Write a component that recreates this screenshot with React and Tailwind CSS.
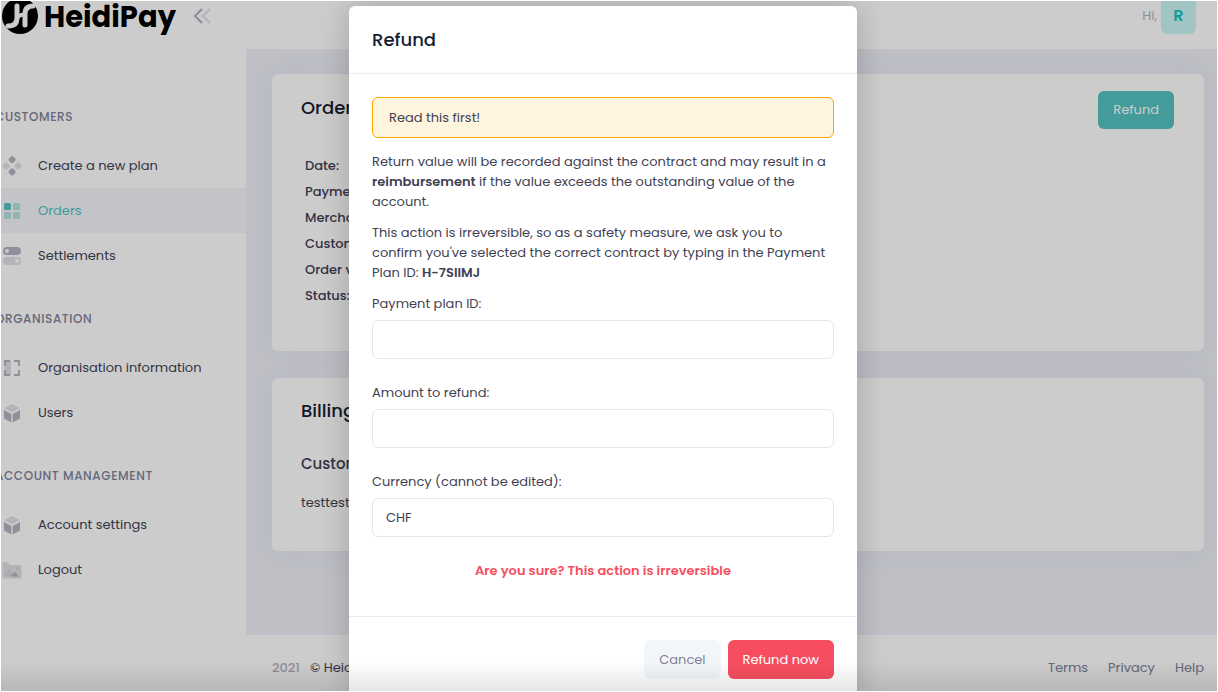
import React from 'react';

const CreateIcon = () => (
    <svg viewBox="0 0 24 24" className="w-6 h-6 text-[#b5b5c3]" fill="currentColor">
        <rect x="9" y="2.6" width="6" height="6" rx="1.6" transform="rotate(45 12 5.8)" />
        <rect x="9" y="14.8" width="6" height="6" rx="1.6" transform="rotate(45 12 17.9)" />
        <rect x="3" y="8.8" width="6" height="6" rx="1.6" transform="rotate(45 6 11.9)" opacity="0.4" />
        <rect x="15" y="8.8" width="6" height="6" rx="1.6" transform="rotate(45 18 11.9)" opacity="0.4" />
    </svg>
);

const OrdersIcon = () => (
    <svg viewBox="0 0 24 24" className="w-6 h-6 text-[#55c3c1]" fill="currentColor">
        <rect x="4" y="4" width="7" height="7" rx="1.5" />
        <rect x="13" y="4" width="7" height="7" rx="1.5" opacity="0.4" />
        <rect x="4" y="13" width="7" height="7" rx="1.5" opacity="0.4" />
        <rect x="13" y="13" width="7" height="7" rx="1.5" opacity="0.4" />
    </svg>
);

const SettlementsIcon = () => (
    <svg viewBox="0 0 24 24" className="w-6 h-6 text-[#b5b5c3]" fill="currentColor" fillRule="evenodd">
        <path d="M7 3h10a4 4 0 0 1 0 8H7a4 4 0 0 1 0-8zm0 6a2 2 0 1 0 0-4 2 2 0 0 0 0 4z" />
        <path opacity="0.4" d="M7 13h10a4 4 0 0 1 0 8H7a4 4 0 0 1 0-8zm10 6a2 2 0 1 0 0-4 2 2 0 0 0 0 4z" />
    </svg>
);

const OrganisationIcon = () => (
    <svg viewBox="0 0 24 24" className="w-6 h-6 text-[#b5b5c3]" fill="currentColor">
        <path d="M4 4h6v2H6v4H4zM20 4v6h-2V6h-4V4zM4 20v-6h2v4h4v2zM20 20h-6v-2h4v-4h2z" />
        <rect x="5" y="5" width="6" height="14" opacity="0.4" />
    </svg>
);

const CubeIcon = () => (
    <svg viewBox="0 0 24 24" className="w-6 h-6 text-[#b5b5c3]" fill="currentColor">
        <path d="M4 9.1l7.3 3.9v8.5l-6.800-3.700a1 1 0 0 1-.5-.9zM20 9.100l-7.300 3.900v8.500l6.800-3.700a1 1 0 0 0 .5-.9z" />
        <path opacity="0.4" d="M11.500 3.200a1 1 0 0 1 1 0l7 3.900L12 11.300 4.500 7.100z" />
    </svg>
);

const LogoutIcon = () => (
    <svg viewBox="0 0 24 24" className="w-6 h-6 text-[#b5b5c3]" fill="currentColor">
        <path opacity="0.4" d="M3.500 20.500h17a1 1 0 0 0 1-1V8a1 1 0 0 0-1-1H10L7.400 4.400a1.500 1.500 0 0 0-1-.4H3.500a1 1 0 0 0-1 1v14.500a1 1 0 0 0 1 1z" />
        <path opacity="0.3" d="M4.500 18.500l5-8 5 8z" />
        <path d="M11 18.500l3.500-5 4.500 5z" />
        <circle cx="18" cy="10" r="1.300" opacity="0.5" />
    </svg>
);

const menu = [
    {
        title: 'Customers',
        items: [
            { label: 'Create a new plan', icon: CreateIcon },
            { label: 'Orders', icon: OrdersIcon, active: true },
            { label: 'Settlements', icon: SettlementsIcon },
        ],
    },
    {
        title: 'Organisation',
        items: [
            { label: 'Organisation information', icon: OrganisationIcon },
            { label: 'Users', icon: CubeIcon },
        ],
    },
    {
        title: 'Account management',
        items: [
            { label: 'Account settings', icon: CubeIcon },
            { label: 'Logout', icon: LogoutIcon },
        ],
    },
];

const orderFields = ['Date:', 'Payment plan:', 'Merchant:', 'Customer:', 'Order value:', 'Status:'];

const Sidebar = () => (
    <aside className="w-[245px] shrink-0 bg-white overflow-hidden">
        <div className="h-[75px] flex items-start">
            <a href="#" className="flex items-start text-black">
                <svg viewBox="0 0 38 34" className="w-[38px] h-[34px]">
                    <circle cx="19" cy="15" r="18" fill="currentColor" />
                    <g fill="none" stroke="#fff" strokeWidth="5" strokeLinecap="round">
                        <path d="M16 5v12q0 8-9 8" />
                        <path d="M32 5q-8 0-8 8v11" />
                        <path d="M16 17q3-4 8-3" strokeWidth="4" />
                    </g>
                </svg>
                <span className="ml-[5px] -mt-1 text-[29px] leading-10 font-bold">HeidiPay</span>
            </a>
            <button aria-label="Collapse sidebar" className="ml-auto mr-[35px] mt-[6px]">
                <svg viewBox="0 0 18 18" className="w-[18px] h-[18px]" fill="none" stroke="#adaecb" strokeWidth="2">
                    <path d="M9 2L2 9l7 7" />
                    <path d="M17 2l-7 7 7 7" opacity="0.4" />
                </svg>
            </button>
        </div>
        <nav>
            {menu.map((section) => (
                <div key={section.title}>
                    <h4 className="mt-[31px] mb-4 -ml-1.5 text-xs leading-5 font-medium uppercase tracking-wider text-[#7e8299]">{section.title}</h4>
                    {section.items.map((item) => (
                        <a
                            key={item.label}
                            href="#"
                            className={`flex items-center h-[45px] ${item.active ? 'bg-[#f3f6f9] text-[#55c3c1]' : 'text-[#3f4254]'}`}
                        >
                            <span className="-ml-px mr-[14px]"><item.icon /></span>
                            {item.label}
                        </a>
                    ))}
                </div>
            ))}
        </nav>
    </aside>
);

const Field = ({ id, label, ...props }) => (
    <div className="mb-6">
        <label htmlFor={id} className="block leading-5 mb-[6px]">{label}</label>
        <input id={id} type="text" className="block w-full h-[39px] px-[13px] rounded-md border border-[#e4e6ef] bg-white outline-none" {...props} />
    </div>
);

const RefundModal = () => (
    <div className="absolute inset-0 z-10 flex justify-center items-start pt-[5px] pr-3 bg-black/20 overflow-hidden">
        <div role="dialog" aria-labelledby="refund-title" className="w-full max-w-[508px] bg-white rounded-md shadow-[0_0_30px_rgba(0,0,0,0.2)] text-[#3f4254]">
            <div className="h-[68px] px-[23px] flex items-center border-b border-[#ebedf3]">
                <h3 id="refund-title" className="text-lg font-medium text-[#181c32]">Refund</h3>
            </div>
            <div className="px-[23px] pt-[23px] pb-[35px] leading-5">
                <div className="h-[41px] px-4 flex items-center rounded-md border border-[#ffa800] bg-[#fff4de]">Read this first!</div>
                <p className="mt-[14px]">
                    Return value will be recorded against the contract and may result in a <strong className="font-semibold">reimbursement</strong> if the value exceeds the outstanding value of the account.
                </p>
                <p className="mt-[11px] mb-[11px]">
                    This action is irreversible, so as a safety measure, we ask you to confirm you've selected the correct contract by typing in the Payment Plan ID: <strong className="font-semibold">H-7SIIMJ</strong>
                </p>
                <Field id="plan-id" label="Payment plan ID:" />
                <Field id="amount" label="Amount to refund:" />
                <Field id="currency" label="Currency (cannot be edited):" defaultValue="CHF" readOnly />
                <p className="text-center font-semibold text-[#f64e60]">Are you sure? This action is irreversible</p>
            </div>
            <div className="px-[23px] py-[23px] flex justify-end gap-[7px] border-t border-[#ebedf3]">
                <button className="h-[39px] px-[15px] rounded-md bg-[#f3f6f9] text-[#7e8299]">Cancel</button>
                <button className="h-[39px] px-[15px] rounded-md bg-[#f64e60] text-white">Refund now</button>
            </div>
        </div>
        <div className="absolute inset-x-0 bottom-0 h-[30px] pointer-events-none bg-linear-to-b from-transparent to-black/10"></div>
    </div>
);

export default function App() {
    return (
        <div className="relative h-screen overflow-hidden flex border border-white font-['Poppins','Inter',sans-serif] text-[13px] text-[#3f4254]">
            <Sidebar />
            <div className="flex-1 min-w-0 flex flex-col bg-[#eef0f8]">
                <header className="h-12 shrink-0 pr-[21px] flex items-start justify-end bg-white">
                    <span className="mr-1 leading-[30px] text-[#b5b5c3]">Hi,</span>
                    <span className="w-[35px] h-[33px] rounded-b-md bg-[#c9f7f5] text-center text-base leading-[30px] font-semibold text-[#1bc5bd]">R</span>
                </header>
                <main className="flex-1 pt-[25px] pl-[26px] pr-[13px]">
                    <section className="mb-[27px] pl-[29px] pr-[30px] pt-[17px] pb-[42px] rounded-md bg-white shadow-[0_0_30px_rgba(82,63,105,0.05)]">
                        <div className="flex items-start justify-between">
                            <h3 className="text-lg leading-[34px] font-medium text-[#181c32]">Order details</h3>
                            <button className="h-[38px] px-[15px] rounded-md bg-[#55c3c1] text-white">Refund</button>
                        </div>
                        <ul className="mt-6 ml-1 font-medium">
                            {orderFields.map((field) => (
                                <li key={field} className="leading-[26px]">{field}</li>
                            ))}
                        </ul>
                    </section>
                    <section className="pl-[29px] pr-[30px] pt-[17px] pb-[38px] rounded-md bg-white shadow-[0_0_30px_rgba(82,63,105,0.05)]">
                        <h3 className="text-lg leading-8 font-medium text-[#181c32]">Billing</h3>
                        <h4 className="mt-[25px] text-[15px] leading-6 font-medium">Customer</h4>
                        <p className="mt-[17px] leading-5">testtest</p>
                    </section>
                </main>
                <footer className="h-14 shrink-0 pt-[23px] pl-[26px] pr-[13px] flex items-start bg-white leading-5">
                    <span className="mr-[10px] font-medium text-[#b5b5c3]">2021</span>
                    <a href="#">© HeidiPay</a>
                    <div className="ml-auto flex gap-5 text-[#7e8299]">
                        <a href="#">Terms</a>
                        <a href="#">Privacy</a>
                        <a href="#">Help</a>
                    </div>
                </footer>
            </div>
            <RefundModal />
        </div>
    );
}
